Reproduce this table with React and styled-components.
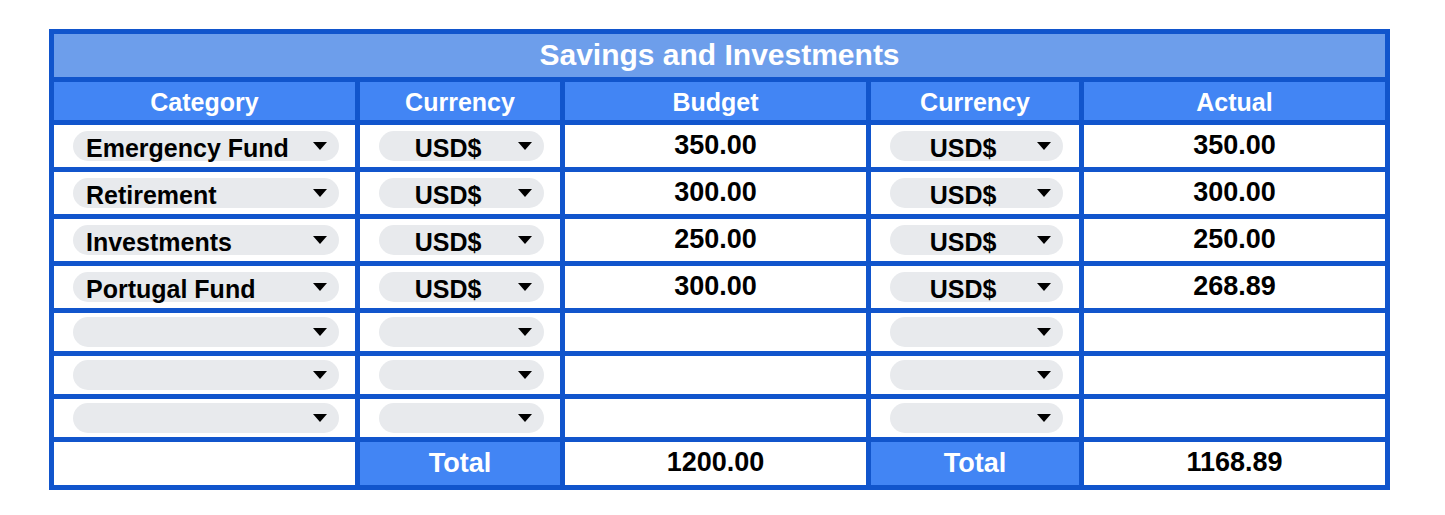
import React from "react";
import styled, { createGlobalStyle } from "styled-components";

const Global = createGlobalStyle`
  html, body { margin: 0; padding: 0; background: #ffffff; }
  body { font-family: "Liberation Sans", Arial, sans-serif; }
`;

const Page = styled.div`
  padding: 29px 0 0 49px;
`;

const Table = styled.div`
  display: grid;
  width: max-content;
  grid-template-columns: 301px 200px 301px 208px 301px;
  grid-template-rows: 43px 38px repeat(4, 42px) repeat(3, 38px) 43px;
  gap: 5px;
  padding: 5px;
  background: #1155cc;
`;

const Title = styled.div`
  grid-column: 1 / -1;
  background: #6d9eeb;
  color: #ffffff;
  font-weight: 700;
  font-size: 30px;
  display: flex;
  align-items: center;
  justify-content: center;
  padding-bottom: 2px;
`;

const Head = styled.div`
  background: #4285f4;
  color: #ffffff;
  font-weight: 700;
  font-size: ${(p) => (p.$big ? "27px" : "25px")};
  display: flex;
  align-items: center;
  justify-content: center;
  padding-top: ${(p) => (p.$big ? "0" : "2px")};
`;

const Cell = styled.div`
  background: #ffffff;
  color: #000000;
  font-weight: 700;
  font-size: 27px;
  display: flex;
  align-items: center;
  justify-content: center;
  padding-bottom: 2px;
`;

const ChipCell = styled.div`
  background: #ffffff;
  display: flex;
  align-items: center;
  padding: 0 16px 0 19px;
`;

const Chip = styled.div`
  flex: 1;
  height: 30px;
  border-radius: 15px;
  background: #e8eaed;
  display: flex;
  align-items: center;
  padding: 0 12px 0 13px;
  gap: 14px;
  font-weight: 700;
  font-size: 25px;
  color: #000000;
`;

const ChipText = styled.span`
  flex: 1;
  text-align: ${(p) => (p.$center ? "center" : "left")};
  white-space: nowrap;
  line-height: 30px;
  padding-top: 4px;
`;

const Arrow = () => (
  <svg width="14" height="8" viewBox="0 0 14 8">
    <polygon points="0,0 14,0 7,8" fill="#000" />
  </svg>
);

const Dropdown = ({ value, center }) => (
  <ChipCell>
    <Chip>
      <ChipText $center={center}>{value}</ChipText>
      <Arrow />
    </Chip>
  </ChipCell>
);

const rows = [
  { cat: "Emergency Fund", cur: "USD$", budget: "350.00", actual: "350.00" },
  { cat: "Retirement", cur: "USD$", budget: "300.00", actual: "300.00" },
  { cat: "Investments", cur: "USD$", budget: "250.00", actual: "250.00" },
  { cat: "Portugal Fund", cur: "USD$", budget: "300.00", actual: "268.89" },
  { cat: "", cur: "", budget: "", actual: "" },
  { cat: "", cur: "", budget: "", actual: "" },
  { cat: "", cur: "", budget: "", actual: "" },
];

export default function App() {
  return (
    <>
      <Global />
      <Page>
        <Table>
          <Title>Savings and Investments</Title>
          <Head>Category</Head>
          <Head>Currency</Head>
          <Head>Budget</Head>
          <Head>Currency</Head>
          <Head>Actual</Head>
          {rows.map((r, i) => (
            <React.Fragment key={i}>
              <Dropdown value={r.cat} />
              <Dropdown value={r.cur} center />
              <Cell>{r.budget}</Cell>
              <Dropdown value={r.cur} center />
              <Cell>{r.actual}</Cell>
            </React.Fragment>
          ))}
          <Cell />
          <Head $big>Total</Head>
          <Cell>1200.00</Cell>
          <Head $big>Total</Head>
          <Cell>1168.89</Cell>
        </Table>
      </Page>
    </>
  );
}
